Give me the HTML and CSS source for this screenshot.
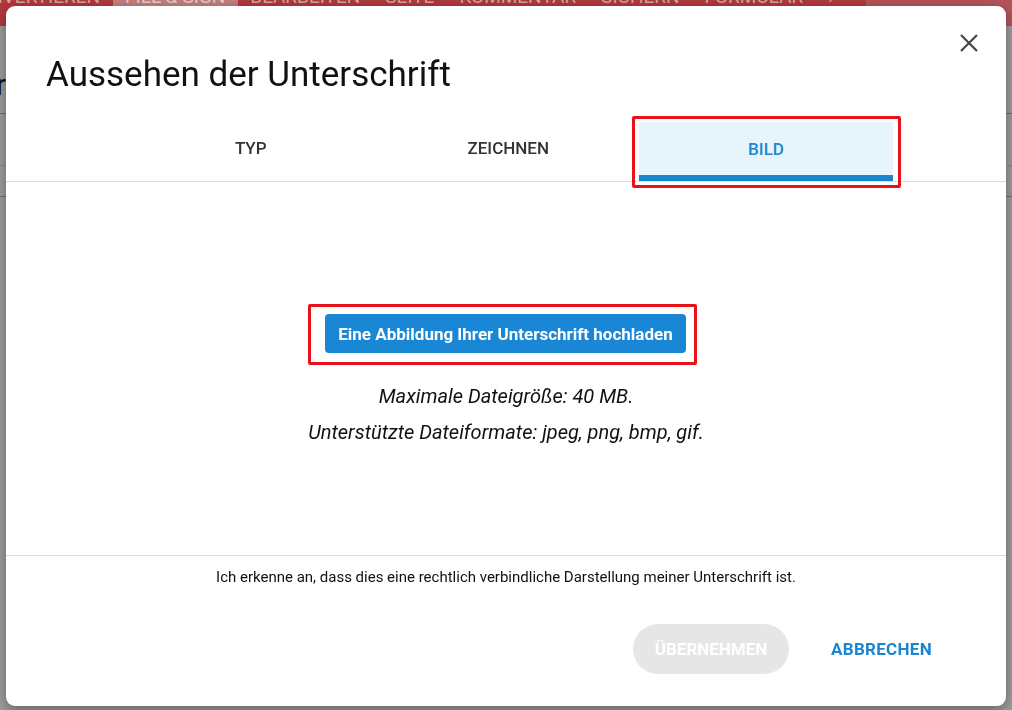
FILE: index.html
```html
<!DOCTYPE html>
<html lang="de">
<head>
<meta charset="UTF-8">
<meta name="viewport" content="width=device-width, initial-scale=1.0">
<title>Aussehen der Unterschrift</title>
<link rel="stylesheet" href="styles.css">
</head>
<body>

<div class="app">
  <div class="topbar">
    <div class="topbar-tabs">
      <span class="topbar-tab">KONVERTIEREN</span>
      <span class="topbar-tab active">FILL &amp; SIGN</span>
      <span class="topbar-tab">BEARBEITEN</span>
      <span class="topbar-tab">SEITE</span>
      <span class="topbar-tab">KOMMENTAR</span>
      <span class="topbar-tab">SICHERN</span>
      <span class="topbar-tab">FORMULAR</span>
      <span class="topbar-tab">&#8250;</span>
    </div>
    <div class="topbar-right"></div>
  </div>
  <div class="toolrow row-a"><span class="stub">r</span></div>
  <div class="toolrow row-b"></div>
  <div class="toolrow row-c"></div>
</div>

<div class="overlay">
  <div class="dialog">
    <button class="close" aria-label="Schließen">
      <svg width="20" height="20" viewBox="0 0 20 20">
        <path d="M2 2 L18 18 M18 2 L2 18" stroke="#444" stroke-width="2.2" fill="none"/>
      </svg>
    </button>

    <h1 class="title">Aussehen der Unterschrift</h1>

    <div class="tabs">
      <div class="tab">TYP</div>
      <div class="tab">ZEICHNEN</div>
      <div class="tab selected">BILD</div>
    </div>

    <div class="content">
      <div class="upload-mark">
        <button class="upload">Eine Abbildung Ihrer Unterschrift hochladen</button>
      </div>
      <p class="hint first">Maximale Dateigröße: 40 MB.</p>
      <p class="hint">Unterstützte Dateiformate: jpeg, png, bmp, gif.</p>
    </div>

    <div class="footer">
      <p class="legal">Ich erkenne an, dass dies eine rechtlich verbindliche Darstellung meiner Unterschrift ist.</p>
      <div class="actions">
        <button class="apply" disabled>ÜBERNEHMEN</button>
        <button class="cancel">ABBRECHEN</button>
      </div>
    </div>
  </div>
</div>

</body>
</html>
```

FILE: styles.css
```css
* {
  box-sizing: border-box;
}
body {
  font-family: Roboto, "Liberation Sans", Arial, sans-serif;
  margin: 0;
  padding: 0;
  background-color: #fff;
  width: 1012px;
  height: 710px;
  overflow: hidden;
}
.app {
  height: 710px;
}

/* top bar, already dimmed: the overlay starts below it */
.topbar {
  height: 26px;
  display: flex;
  background-color: #b1393d;
  overflow: hidden;
}
.topbar-tabs {
  width: 914px;
  flex-shrink: 0;
  display: flex;
  margin-left: -48px;
}
.topbar-tab {
  color: #d9a3a5;
  font-size: 19px;
  line-height: 20px;
  padding: 0 12.5px;
  margin-top: -13px;
  white-space: nowrap;
  height: 39px;
}
.topbar-tab.active {
  background-color: #c47f82;
  color: #e8cccd;
}
.topbar-right {
  flex: 1;
  background-color: #b5555a;
}

.toolrow {
  border-bottom: 1px solid #bbb;
}
.row-a {
  height: 88px;
  padding-top: 44px;
}
.row-b {
  height: 52px;
  border-bottom-color: #ddd;
}
.row-c {
  height: 31px;
}
.stub {
  font-size: 30px;
  line-height: 30px;
  color: #222;
  display: block;
  margin-left: -4px;
}

.overlay {
  position: fixed;
  top: 26px;
  left: 0;
  width: 1012px;
  height: 684px;
  background-color: rgba(0, 0, 0, 0.38);
}
.dialog {
  position: absolute;
  top: -20px;
  left: 6px;
  width: 1000px;
  height: 700px;
  background-color: #fff;
  border-radius: 9px;
  box-shadow: 0 4px 14px rgba(0, 0, 0, 0.4);
  display: flex;
  flex-direction: column;
}
.close {
  position: absolute;
  top: 25px;
  right: 25px;
  width: 24px;
  height: 24px;
  border: none;
  background: none;
  padding: 2px;
  cursor: pointer;
}
.title {
  font-size: 35px;
  font-weight: 400;
  color: #111;
  margin: 48px 0 0 40px;
  line-height: 41px;
}
.tabs {
  display: flex;
  margin-top: 20px;
  padding-left: 116px;
  height: 67px;
  border-bottom: 1px solid #ddd;
}
.tab {
  width: 257.5px;
  display: flex;
  align-items: center;
  justify-content: center;
  font-size: 17px;
  font-weight: 500;
  color: #333;
  padding-bottom: 1px;
}
.tab.selected {
  position: relative;
  color: #1a86d0;
  background-color: #e8f4fc;
  margin: 7px 0 0 2px;
  width: 254px;
  border-bottom: 6px solid #1a86d0;
  padding-bottom: 0;
}
.tab.selected::after {
  content: "";
  position: absolute;
  top: -6px;
  left: -7px;
  right: -8px;
  bottom: -13px;
  border: 3px solid #e8121a;
  border-radius: 2px;
}

.content {
  flex: 1;
  display: flex;
  flex-direction: column;
  align-items: center;
  padding-top: 122px;
  border-bottom: 1px solid #ddd;
}
.upload-mark {
  border: 3px solid #e8121a;
  border-radius: 2px;
  padding: 7px 8px 9px 14px;
  margin-right: 7px;
}
.upload {
  display: block;
  background-color: #1a86d6;
  color: #fff;
  border: none;
  border-radius: 4px;
  font-family: Roboto, "Liberation Sans", Arial, sans-serif;
  font-size: 17px;
  font-weight: 700;
  height: 39px;
  padding: 0;
  width: 361px;
  cursor: pointer;
}
.hint {
  font-size: 20px;
  font-style: italic;
  color: #111;
  margin: 0;
  line-height: 36px;
}
.hint.first {
  margin-top: 13px;
}

.footer {
  height: 150px;
}
.legal {
  text-align: center;
  font-size: 15px;
  color: #111;
  margin: 12px 0 0;
  line-height: 18px;
}
.actions {
  display: flex;
  justify-content: flex-end;
  align-items: center;
  margin-top: 38px;
  padding-right: 54px;
  gap: 22px;
}
.apply {
  background-color: #e6e6e6;
  color: #fff;
  border: none;
  border-radius: 25px;
  height: 50px;
  width: 156px;
  font-family: Roboto, "Liberation Sans", Arial, sans-serif;
  font-size: 17px;
  font-weight: 700;
}
.cancel {
  background: none;
  border: none;
  color: #1a86d0;
  font-family: Roboto, "Liberation Sans", Arial, sans-serif;
  font-size: 17px;
  font-weight: 700;
  letter-spacing: 0.3px;
  padding: 0 20px;
  height: 50px;
  cursor: pointer;
}
```
